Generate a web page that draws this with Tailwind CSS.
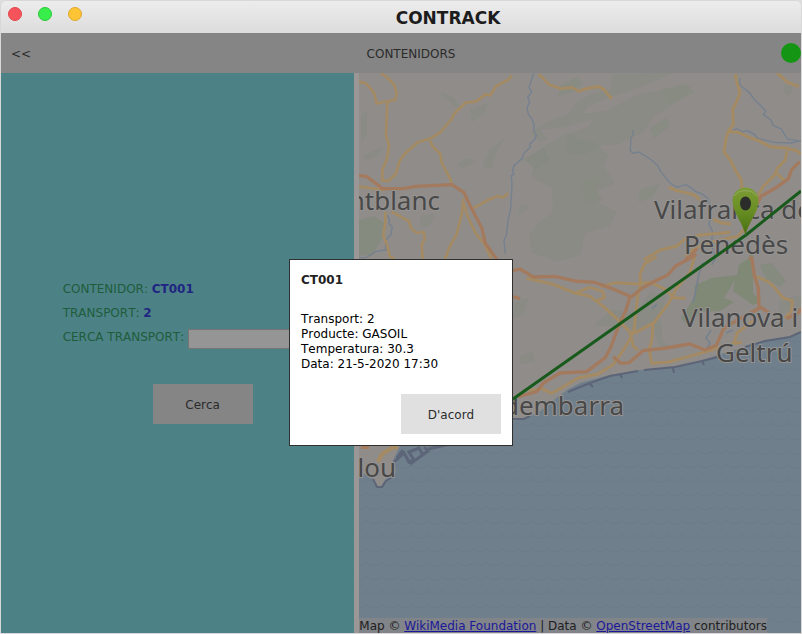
<!DOCTYPE html>
<html lang="ca">
<head>
<meta charset="utf-8">
<meta name="viewport" content="width=device-width, initial-scale=1">
<title>CONTRACK</title>
<script src="https://cdn.jsdelivr.net/npm/@tailwindcss/browser@4"></script>
</head>
<body class="bg-[#dedede] font-['DejaVu_Sans',Verdana,sans-serif] text-xs text-[#2b2b2b] [font-kerning:none]">
<div class="flex min-h-screen flex-col overflow-hidden rounded-t-md border border-[#d8d8d8]">

  <header class="flex h-8 shrink-0 bg-linear-to-b from-[#ececec] to-[#dcdcdc]">
    <div class="flex w-[94px] gap-4 pt-[6px] pl-[7px]">
      <button type="button" aria-label="Tanca" class="size-3.5 rounded-full border border-[#e2464b] bg-[#f6535a]"></button>
      <button type="button" aria-label="Maximitza" class="size-3.5 rounded-full border border-[#2cc83c] bg-[#37ee4a]"></button>
      <button type="button" aria-label="Minimitza" class="size-3.5 rounded-full border border-[#e0a72e] bg-[#fdc435]"></button>
    </div>
    <h1 class="flex-1 pt-px text-center text-[17px] leading-8 font-bold text-[#1c1c1c]">CONTRACK</h1>
  </header>

  <nav class="flex h-10 shrink-0 items-center bg-[#858585]">
    <button type="button" class="h-10 w-10 pt-0.5">&lt;&lt;</button>
    <h2 class="flex-1 pt-0.5 text-center">CONTENIDORS</h2>
    <span role="img" aria-label="Connectat" class="size-5 rounded-full bg-[#149614]"></span>
  </nav>

  <main class="relative grid flex-1 grid-cols-[4fr_5px_5fr]">
    <section class="flex items-center justify-center overflow-hidden bg-[#4c8286]">
      <form class="ml-[50px] w-[280px] pb-[5px] leading-6 text-[#1f5c3c]">
        <p>CONTENIDOR: <b class="text-[#1f2580]">CT001</b></p>
        <p>TRANSPORT: <b class="text-[#1f2580]">2</b></p>
        <div class="flex items-end gap-1">
          <label for="cerca">CERCA TRANSPORT:</label>
          <input id="cerca" type="text" class="h-5 w-0 flex-1 border border-[#757575] bg-[#959595] px-1 text-[#2b2b2b]">
        </div>
        <div class="mt-[35px] flex justify-center">
          <button type="button" class="h-10 w-25 bg-[#858585] pt-0.5 text-[#2b2b2b]">Cerca</button>
        </div>
      </form>
    </section>

    <div class="bg-[#9a9796]"></div>

    <section class="relative overflow-hidden bg-[#707f8c] [font-kerning:normal]">
      <svg class="absolute inset-0 size-full" viewBox="359 73 442 560" preserveAspectRatio="xMinYMin slice" role="img" aria-label="Mapa">
        <defs>
          <pattern id="waves" width="15" height="14" patternUnits="userSpaceOnUse">
            <path d="M0 6q4 0 7.500-3q3.500 3 7.500 3" fill="none" stroke="#6d7c8a" stroke-width="1.500"/>
          </pattern>
          <linearGradient id="pin" x1="0" y1="0" x2="0" y2="1">
            <stop offset="0" stop-color="#7c9c34"/><stop offset=".45" stop-color="#6a8f25"/><stop offset="1" stop-color="#466f10"/>
          </linearGradient>
        </defs>
        <rect x="359" y="73" width="442" height="560" fill="#707f8c"/>
        <rect x="359" y="73" width="442" height="560" fill="url(#waves)"/>

        <!-- land -->
        <path d="M359 73H801V332L790 337L765 341L745 347L718 355L700 361L675 367L640 370L610 375L580 383L567 390L550 403L538 413L520 420L505 421L480 437L436 444L400 446L393 460L396 472L385 480L381 487L376 486L372 477L359 472Z" fill="#8f8c8a"/>
        <g fill="#868b80">
          <path d="M672 73l-12 6l-30 12l-20 6l-22 9l-6 8l25-3l30-16l30-6l26-4l-12 14l-28 18l-10 15l-24 12l-16 1l-20 10l-17-3l2-18l20-7l5-8l-28 8l-25 3l8 9l-8 3l-9-9l18-12l20-7l8-12l15-8l18-4l3-16z" opacity=".6"/>
          <path d="M549 144l18-11l10 6l18 4l14 13l-6 9l12 19l-18 6l2 14l18 8l-8 14l-24 7l-5 22l-22 6l-26-8l-3-18l12-14l12-9l-1-24l-20-11l2-12l-12-6l16-7z" opacity=".6"/>
          <path d="M560 86l17-9l6 6l-8 8l-17 6zM580 182l20-4l-5 12l8 10l-16 4zM660 90l24-6l10 8l-22 12zM650 128l16-10l4 8l-16 12zM640 190l20-6l-8 14l-14 4z" opacity=".7"/>
          <path d="M470 110l18-7l-4 10l-12 9zM489 150l16-12l-9 14l-4 16l-9-1zM440 93l12 3l8 11l-6-1zM361 116l6-6v24l-5 8zM364 155l18-8l-4 9l-13 5zM421 216l14-2l-6 12l-9 1zM457 165l10-7l9 3l-12 7zM525 160l18-13l7 12l-14 11zM520 205l9 2l-11 9zM515 303l14-6l-6 18l-10 2z" opacity=".6"/>
          <path d="M359 220l15-4l11 8l-4 17l-9 15l-13-1z"/>
          <path d="M594 325l18-15l24 2l15-20l16 4l-10 26l-18 8l-20-3zM520 357l12-6l3 10l-15 3zM780 300l21-5v10l-22 10zM650 320l12 1v20l12 8l-14-2zM785 84l8 3l-3 10l-6-5z" opacity=".6"/>
        </g>
        <path d="M695 285l17-7l25-3l2-10l10-7v-3h4v38l8 9l-8 3l-20-14l2-11l-11 18l10 4l-14 9l-20 1l-12 14l-7-8l13-20z" fill="#7f8976"/>
        <path d="M760 265l12-2l14 18l-6 6l-14-8z" fill="#868b80"/>

        <!-- rivers -->
        <g fill="none" stroke="#75818f" stroke-width="4" transform="translate(352 70) scale(.3333)">
          <path d="M545 10l-4 12l-10 30l8 15l-12 14l6 16l-8 16l4 20l10 13l8 20l-2 14l8 16l-6 14l-14 12l2 10l-20 18l-4 15l-25 22l-4 14l4 10l-8 6l2 30l-4 70l-8 35l-4 40l-8 20l4 40"/>
          <path d="M105 435l8 14l-2 12l10 9l-5 25l-15 15v30l-30 5l-28 18h-25"/>
        </g>
        <g fill="none" stroke="#75818f" stroke-width="4" transform="translate(577 70) scale(.3333)">
          <path d="M488 25v20l28 22l15 20l22 22l14 15l-8 10l22 15l8 18l24 10l18 30l40 7M465 182l15-6l18 10l12-5l22 12l10 12l50 12l52 2l38-10M167 180l2 12l-7 12l-2 38l8 8l16-4l22 12l20 14l14 12l12 22l28 34l20 12l26-8l15 8l14 12l24 10l16 15l4 55l-3 20l10 18l-2 45l12 38l-12 20"/>
        </g>
        <path d="M703 262l-4 12l-4 20l-2 9M711 330l-5 8l4 5l-5 9M726 333l7-3M652 309l5-5" fill="none" stroke="#75818f" stroke-width="1.500"/>

        <!-- shoreline -->
        <path d="M801 332L790 337L765 341L745 347M718 357L702 361L675 367L644 370M638 371L610 376L593 382L580 387L568 392M530 416L524 419L512 419" fill="none" stroke="#5d6578" stroke-width="2"/>
        <path d="M673 368l1 5M702 361l2 4M620 374l2 4M590 384l3 3M373 479l4 8h5l4-6l9-6" fill="none" stroke="#5d6578" stroke-width="2"/>
        <path d="M394 462l10-9l5 9l5-2l-5-8l10-4l4 7M410 464l18-13l-4-4M397 458l6-8M428 449l22-5" fill="none" stroke="#5d6578" stroke-width="3"/>

        <!-- secondary roads -->
        <g fill="none" stroke="#a48b63" stroke-width="8" stroke-linejoin="round" transform="translate(352 70) scale(.3333)">
          <path d="M20 35l22 5l24 28l8 32l22-4l34-6l4-22l-8-25l-22-22l-18-12M106 98l-2 48l-2 50l9 30l-6 40l-14 35v30l18 2l22-20l12-40l14-20l40-36l40-12l30-20l30-35l12-22l32-30l30-3l30-22l14 3l18-28l38-20l8-12M235 212l6 16l24 24l4 26l26 50l5 16M20 350l40 5l40 5M100 425v32l-6 40l12 30l7 32l15 8M118 425l20 10l34 20l5 20l18 14l20-3l4 20l-10 18l3 40l8 15M335 385l-6 48l-15 60l-20 35l-15 40M335 400l12 40l24 50l25 30l22 46M358 418l50-28l30-12l15 5l15-13M560 12l32 32l35 12l33-4l18 10"/>
        </g>
        <g fill="none" stroke="#a48b63" stroke-width="9" stroke-linejoin="round" transform="translate(577 70) scale(.3333)">
          <path d="M0 65l35-11l30-4l16 8l10 14l14 14M600 8l30 28l36 14M475 12l4 22l10 35l-12 30l-10 20l2 45l-16 22l-6 20l-6 40l20 25l15 32l16 25l4 30M455 185l30 2l30 15l30 10l34 18l52 5l30 8l10 10M630 242l-5 28l-24 25l-8 20l-35 35l-28 50M600 310l20 20M275 352l25 10l50 12l18 16M408 448l24 10l30 4M200 570l50-30l50-12l20-18l50-15l90-8M325 560l28-26l60-20l70-15l20-25"/>
        </g>
        <g fill="none" stroke="#a48b63" stroke-width="9" stroke-linejoin="round" transform="translate(510 255) scale(.3333)">
          <path d="M50 70l80 18l65 26l45 10l40 30l50 46l30 32l10 42l15 12M200 112l40-15l38 12l5 18l-20 10M270 95l48-12l62 4l42-5l45 22l25 24l35 2M440 5l-35 20l-15 32l2 30l-8 30l-6 50l-6 60l-15 30l-18 30l-30 42l-45 28l-60 12l-50 30l-30 16l-28-14l-40 6M372 235l60-32l45-60l24-45l38-45l15-48M430 200l-5 60l-8 20l8 45l50-4l60-16l70-20l50-16l40-8M740 65l40 18l25 28l14 18l28 8l-2 30l-20 22M672 265l10-32l30-22l20-16"/>
        </g>
        <path d="M378 462l4-8l10-6l6-1" fill="none" stroke="#a48b63" stroke-width="4"/>
        <path d="M361 447h8" fill="none" stroke="#a67b5e" stroke-width="4"/>

        <!-- main roads -->
        <g fill="none" stroke="#a47a5f" stroke-width="10" stroke-linejoin="round" transform="translate(352 70) scale(.3333)">
          <path d="M20 316l24 4l22 16l26 20h60l40-7l108-5l36 24l20 42l34 65l10 45l20 28l18 25"/>
        </g>
        <g fill="none" stroke="#a47a5f" stroke-width="10" stroke-linejoin="round" transform="translate(577 70) scale(.3333)">
          <path d="M668 275l-24 24l-10 28l-40 28l-42 24l-20 45l-30 60M325 570l36-34M520 560l2 10"/>
        </g>
        <g fill="none" stroke="#a47a5f" stroke-width="10" stroke-linejoin="round" transform="translate(510 255) scale(.3333)">
          <path d="M5 48l25-6l40 24l64-2l60 14l60 4l50 18l60 26l30-25l40-22l38-18l25-28l52-28l10-8M360 125l-12 40l-26 58l-18 50l-18 35l-56 42l-80 4l-50 30l-20 26l-80 22M310 305l22 20l25-2l42-36l70-8l70-12l46 18l34-14l22-50l48-30l64-34l28 20M725 5l8 55l12 40l2 55M10 125l20 6M865 165h10l-10 8l-35 18"/>
        </g>

        <!-- place names and route -->
        <g font-family="'Noto Sans','Open Sans',sans-serif" font-size="26" fill="#484848" stroke="#969492" stroke-width="2" paint-order="stroke" stroke-linejoin="round">
          <text x="440" y="210" text-anchor="end">ntblanc</text>
          <text x="654" y="219">Vilafranca de</text>
          <text x="736" y="254" text-anchor="middle">Penedès</text>
          <text x="682" y="327">Vilanova i</text>
          <text x="716" y="362">Geltrú</text>
          <text x="624" y="415" text-anchor="end">dembarra</text>
          <text x="396" y="477" text-anchor="end">lou</text>
        </g>
        <path d="M801 191L746 235L513 399L450 443" fill="none" stroke="#185a1b" stroke-width="3"/>
        <path d="M745.500 236C744 224 732.500 213 732.500 200.500a13 13 0 0 1 26 0C758.500 213 747 224 745.500 236Z" fill="url(#pin)"/>
        <path d="M734.500 196a12 9 0 0 1 22 0" fill="none" stroke="#93ab62" stroke-width="1"/>
        <ellipse cx="745.500" cy="203.500" rx="5.500" ry="7" fill="#2b2d2b"/>
      </svg>
      <p class="absolute bottom-0 left-0 bg-[#818488] pt-px leading-[14px] whitespace-nowrap text-[#202020]">Map © <a href="#" class="text-[#1c189a] underline">WikiMedia Foundation</a> | Data © <a href="#" class="text-[#1c189a] underline">OpenStreetMap</a> contributors</p>
    </section>

    <div class="absolute inset-0 flex items-center justify-center pb-px">
      <div role="dialog" aria-modal="true" aria-labelledby="dialog-title" class="w-56 border border-[#303030] bg-white px-[11px] pt-3 pb-[11px] text-black">
        <h3 id="dialog-title" class="leading-4 font-bold text-[#222222]">CT001</h3>
        <div class="mt-6 leading-[15px]">
          <p>Transport: 2</p>
          <p>Producte: GASOIL</p>
          <p>Temperatura: 30.3</p>
          <p>Data: 21-5-2020 17:30</p>
        </div>
        <div class="mt-[22px] flex justify-end">
          <button type="button" class="h-10 w-25 bg-[#e0e0e0] pt-0.5 text-[#2b2b2b]">D'acord</button>
        </div>
      </div>
    </div>
  </main>
</div>
</body>
</html>
